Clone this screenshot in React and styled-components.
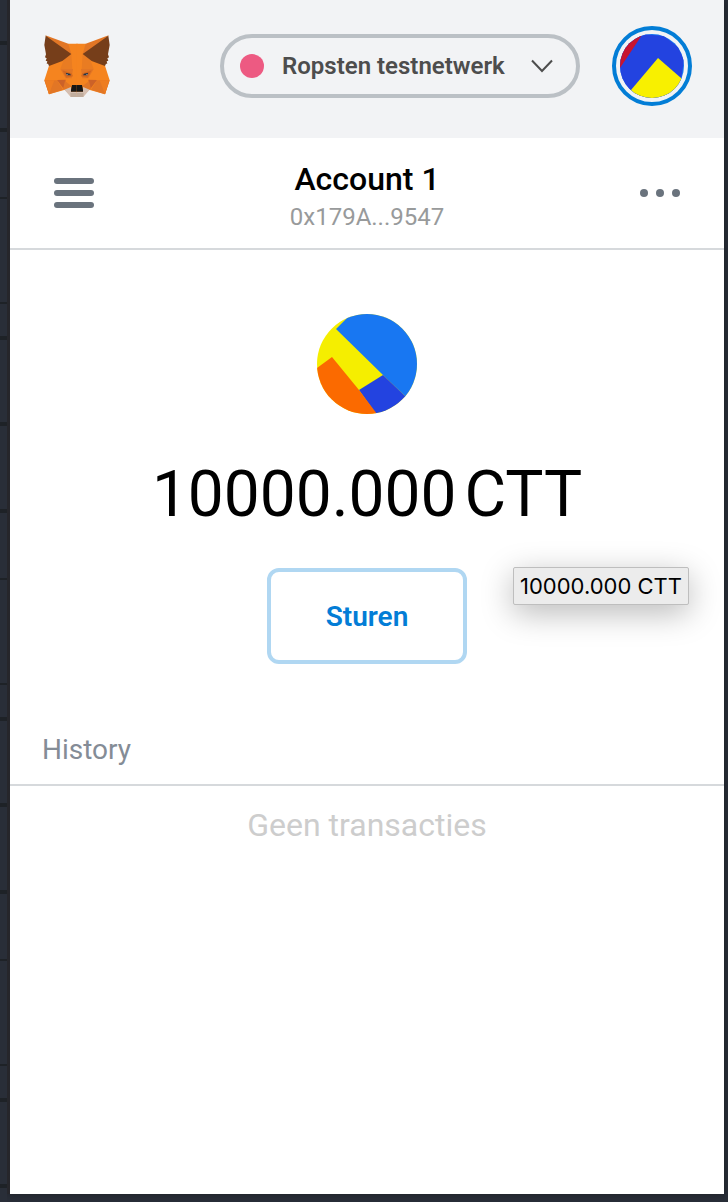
import React from "react";
import styled, { createGlobalStyle } from "styled-components";

const GlobalStyle = createGlobalStyle`
  *, *::before, *::after { box-sizing: border-box; }
  body { margin: 0; background: #28303a; }
  button { font: inherit; cursor: pointer; }
`;

/* Dark editor window that shows through along the edges of the popup */
const Desktop = styled.div`
  min-height: 100vh;
  display: flex;
  padding: 0 4px 8px 7px;
  background-color: #292e38;
  background-image: linear-gradient(
    #292e38 0 41px, #1e2227 41px 45px, #292e38 45px 128px,
    #1e2227 128px 132px, #292e38 132px 197px, #1e2227 197px 199px,
    #292e38 199px 302px, #1e2227 302px 304px, #292e38 304px 336px,
    #1e2227 336px 340px, #292e38 340px 381px
  );
  background-size: 7px 381px;
  background-repeat: repeat-y;
  font-family: Roboto, "Liberation Sans", sans-serif;
`;

const Popup = styled.main`
  flex: 1;
  min-width: 0;
  display: flex;
  flex-direction: column;
  background: #fff;
  border-left: 3px solid #26262b;
  box-shadow: 0 0 8px #1c1f24;
  clip-path: inset(0 -4px -8px 0);
`;

const Header = styled.header`
  display: flex;
  align-items: center;
  gap: 32px;
  height: 138px;
  padding: 0 32px 6px 34px;
  background: #f2f3f5;
`;

const LogoLink = styled.a`
  display: flex;
  margin-right: auto;
`;

const NetworkButton = styled.button`
  display: flex;
  align-items: center;
  width: 360px;
  height: 64px;
  padding: 0 22px 0 16px;
  border: 4px solid #bbc0c5;
  border-radius: 32px;
  background: transparent;
  color: #4d4d4d;
  font-size: 24px;
  font-weight: 600;
  line-height: 32px;
  white-space: nowrap;
`;

const NetworkDot = styled.span`
  width: 24px;
  height: 24px;
  margin-right: 18px;
  border-radius: 50%;
  background: #ed5a82;
`;

const Chevron = styled.svg`
  margin-left: auto;
`;

const AvatarButton = styled.button`
  display: flex;
  align-items: center;
  justify-content: center;
  width: 80px;
  height: 80px;
  padding: 0;
  border: 4px solid #037dd6;
  border-radius: 50%;
  background: transparent;
`;

const AccountBar = styled.section`
  display: flex;
  align-items: center;
  justify-content: space-between;
  height: 112px;
  padding: 0 44px;
  border-bottom: 2px solid #d6d9dc;
`;

const IconButton = styled.button`
  display: flex;
  padding: 0;
  border: 0;
  background: transparent;
  color: #6a737d;
`;

const AccountButton = styled.button`
  display: flex;
  flex-direction: column;
  align-items: center;
  padding: 8px 0 0;
  border: 0;
  background: transparent;
`;

const AccountName = styled.span`
  color: #000;
  font-size: 32px;
  font-weight: 500;
  line-height: 40px;
`;

const AccountAddress = styled.span`
  color: #989a9b;
  font-size: 24px;
  line-height: 36px;
`;

const Overview = styled.section`
  position: relative;
  display: flex;
  flex-direction: column;
  align-items: center;
  padding: 64px 32px 56px;
`;

const Balance = styled.h1`
  display: flex;
  gap: 8px;
  margin: 42px 0 34px;
  color: #000;
  font-size: 64px;
  font-weight: 400;
  line-height: 78px;
`;

const SendButton = styled.button`
  width: 200px;
  height: 96px;
  border: 4px solid #b0d7f2;
  border-radius: 12px;
  background: #fff;
  color: #037dd6;
  font-size: 28px;
  font-weight: 600;
`;

const Tooltip = styled.div`
  position: absolute;
  top: 317px;
  left: calc(50% + 146px);
  padding: 0 6px;
  border: 1px solid #bebebe;
  border-radius: 2px;
  background: #ececec;
  box-shadow: 0 8px 32px rgba(0, 0, 0, 0.28);
  color: #000;
  font-family: Inter, "Liberation Sans", sans-serif;
  font-size: 22px;
  line-height: 36px;
  white-space: nowrap;
`;

const HistoryTitle = styled.h2`
  margin: 0;
  padding: 10px 32px 14px;
  border-bottom: 2px solid #d6d9dc;
  color: #848c96;
  font-size: 28px;
  font-weight: 400;
  line-height: 40px;
`;

const EmptyHistory = styled.p`
  margin: 0;
  padding: 19px 32px;
  color: #cdcdcd;
  font-size: 32px;
  line-height: 40px;
  text-align: center;
`;

/* Left half of the fox head; the right half is the same set mirrored */
const foxHalf = [
  ["#f5841f", "M124 46H96L60 60 38 112 24 156 38 198 86 184 104 205H124z"],
  ["#e27625", "M27 21 96 46 105 77 60 70z"],
  ["#e97c22", "M105 77 108 122H72L84 90z"],
  ["#763e1a", "M28 22 105 77 78 98 38 113 35 106 31 106 33 99 28 97 31 90 26 87 29 78 24 50z"],
  ["#e27625", "M72 122H110L106 150 88 150z"],
  ["#d4681f", "M78 126 106 135 110 144 90 148z"],
  ["#e27625", "M24 156H62L80 184 38 198z"],
  ["#ee7d21", "M26 156 54 156 38 198z"],
  ["#cc6228", "M62 155 88 154 84 184z"],
  ["#e27625", "M86 158 80 182 86 184 106 174z"],
  ["#233447", "M88 133 101 136 104 141 92 141z"],
  ["#8a9aa5", "M90 137 95 138 94 141 91 140z"],
  ["#d5bfb2", "M84 184 104 176V190H124V205H103z"],
  ["#c0ac9d", "M102 194H124V206H103z"],
  ["#161616", "M107 170H124V190H104V184z"],
];

const FoxLogo = () => (
  <svg width="66" height="62" viewBox="23 20 198 186" aria-hidden="true">
    {["", "matrix(-1 0 0 1 244 0)"].map((side) => (
      <g key={side} transform={side}>
        {foxHalf.map(([fill, d]) => (
          <path key={d} fill={fill} d={d} />
        ))}
      </g>
    ))}
  </svg>
);

const AccountAvatar = () => (
  <svg width="64" height="64" viewBox="0 0 64 64" aria-hidden="true">
    <clipPath id="account-circle"><circle cx="32" cy="32" r="32" /></clipPath>
    <g clipPath="url(#account-circle)">
      <path fill="#1877f2" d="M0 0h64v64H0z" />
      <path fill="#2343e0" d="M0 0H22L44 2 58 13 64 26 61 46V64H0z" />
      <path fill="#c8142f" d="M0 34 22 1V0H0z" />
      <path fill="#f8f000" d="M38 24 11 56v8h50V44z" />
    </g>
  </svg>
);

const TokenAvatar = () => (
  <svg width="100" height="100" viewBox="0 0 100 100" aria-hidden="true">
    <clipPath id="token-circle"><circle cx="50" cy="50" r="50" /></clipPath>
    <g clipPath="url(#token-circle)">
      <path fill="#f5ee00" d="M0 0h100v100H0z" />
      <path fill="#1877f2" d="M30 4 19 15 66 61 88 82 100 94V0H34z" />
      <path fill="#2343e0" d="M42 76 66 61 88 82 100 94v6H59z" />
      <path fill="#fb6a00" d="M0 54 15 43 42 76 60 100H0z" />
    </g>
  </svg>
);

export default function App() {
  return (
    <>
      <GlobalStyle />
      <Desktop>
        <Popup>
          <Header>
            <LogoLink href="#" aria-label="MetaMask">
              <FoxLogo />
            </LogoLink>
            <NetworkButton type="button">
              <NetworkDot />
              Ropsten testnetwerk
              <Chevron width="24" height="16" viewBox="0 0 24 16" fill="none" stroke="#4d4d4d" strokeWidth="2" aria-hidden="true">
                <path d="M2 2.5 12 13 22 2.5" />
              </Chevron>
            </NetworkButton>
            <AvatarButton type="button" aria-label="Account 1">
              <AccountAvatar />
            </AvatarButton>
          </Header>

          <AccountBar>
            <IconButton type="button" aria-label="Menu">
              <svg width="40" height="30" viewBox="0 0 40 30" fill="currentColor">
                <rect width="40" height="6" rx="3" />
                <rect y="12" width="40" height="6" rx="3" />
                <rect y="24" width="40" height="6" rx="3" />
              </svg>
            </IconButton>
            <AccountButton type="button">
              <AccountName>Account 1</AccountName>
              <AccountAddress>0x179A...9547</AccountAddress>
            </AccountButton>
            <IconButton type="button" aria-label="Opties">
              <svg width="40" height="8" viewBox="0 0 40 8" fill="currentColor">
                <circle cx="4" cy="4" r="4" />
                <circle cx="20" cy="4" r="4" />
                <circle cx="36" cy="4" r="4" />
              </svg>
            </IconButton>
          </AccountBar>

          <Overview>
            <TokenAvatar />
            <Balance>
              <span>10000.000</span>
              <span>CTT</span>
            </Balance>
            <SendButton type="button">Sturen</SendButton>
            <Tooltip role="tooltip">10000.000 CTT</Tooltip>
          </Overview>

          <section>
            <HistoryTitle>History</HistoryTitle>
            <EmptyHistory>Geen transacties</EmptyHistory>
          </section>
        </Popup>
      </Desktop>
    </>
  );
}
